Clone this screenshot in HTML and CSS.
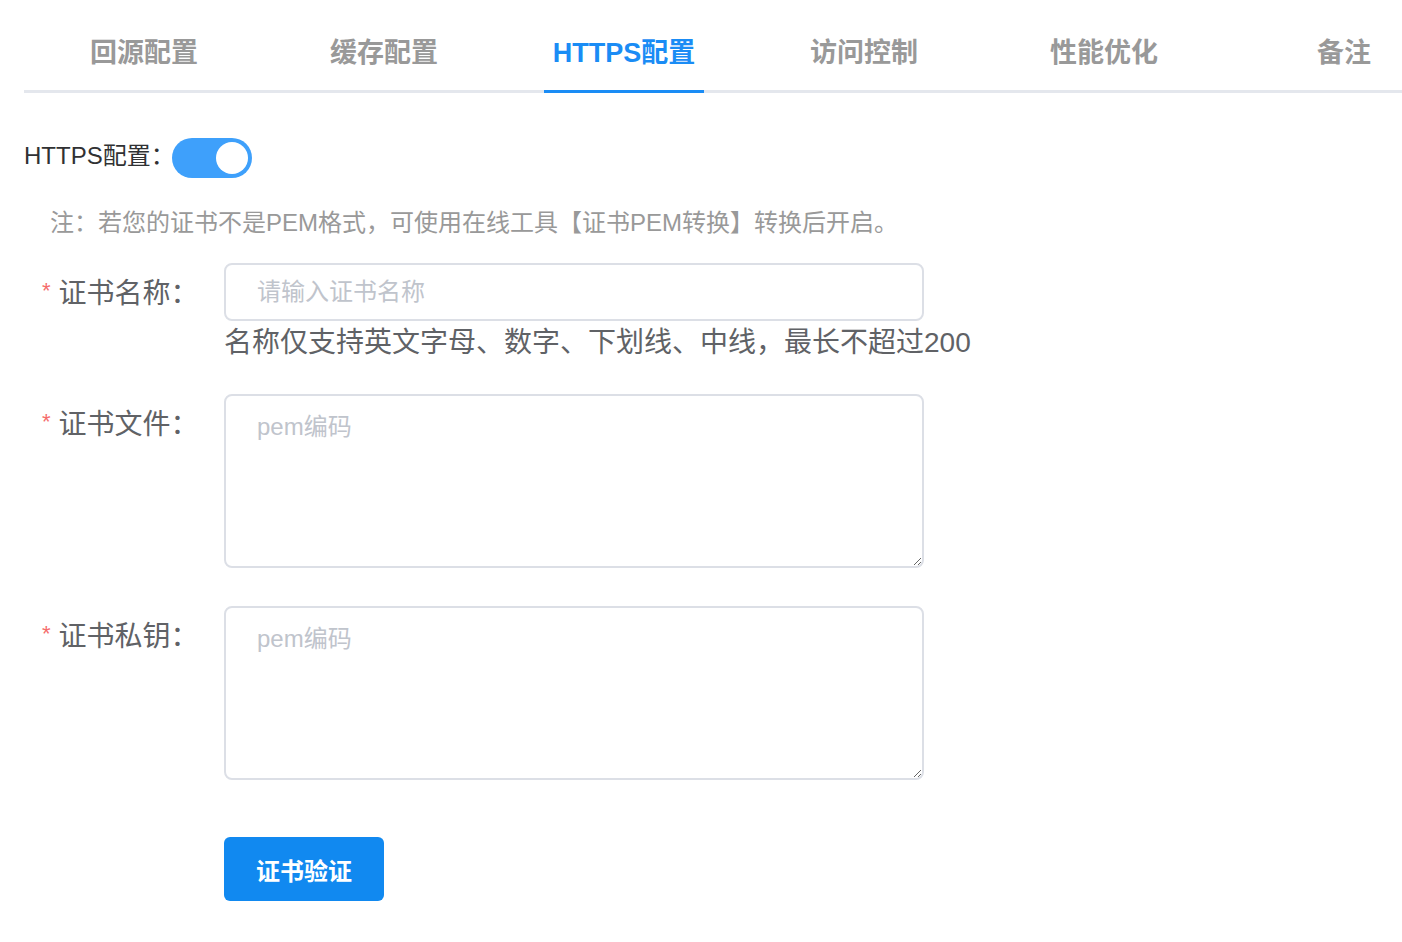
FILE: index.html
```html
<!DOCTYPE html>
<html lang="zh-CN">
<head>
  <meta charset="UTF-8" />
  <title>HTTPS配置</title>
  <link rel="stylesheet" href="styles.css">
</head>
<body>

  <div class="tabs">
    <div class="tab">回源配置</div>
    <div class="tab">缓存配置</div>
    <div class="tab active">HTTPS配置</div>
    <div class="tab">访问控制</div>
    <div class="tab">性能优化</div>
    <div class="tab">备注</div>
  </div>

  <div class="content">
    <div class="switch-row">
      <span class="switch-label">HTTPS配置：</span>
      <span class="switch on"><span class="knob"></span></span>
    </div>

    <div class="note">注：若您的证书不是PEM格式，可使用在线工具【证书PEM转换】转换后开启。</div>

    <div class="form-item">
      <label class="label required">证书名称：</label>
      <div class="field">
        <input class="input" type="text" placeholder="请输入证书名称">
        <div class="hint">名称仅支持英文字母、数字、下划线、中线，最长不超过200</div>
      </div>
    </div>

    <div class="form-item">
      <label class="label required">证书文件：</label>
      <div class="field">
        <textarea class="textarea" placeholder="pem编码"></textarea>
      </div>
    </div>

    <div class="form-item">
      <label class="label required">证书私钥：</label>
      <div class="field">
        <textarea class="textarea" placeholder="pem编码"></textarea>
      </div>
    </div>

    <div class="form-item actions">
      <div class="field">
        <button class="btn">证书验证</button>
      </div>
    </div>
  </div>

</body>
</html>
```

FILE: styles.css
```css
body {
  margin: 0;
  font-family: "Liberation Sans", "Noto Sans CJK SC", sans-serif;
  background: #fff;
  overflow: hidden;
}

.tabs {
  display: flex;
  margin-left: 24px;
  border-bottom: 3px solid #e4e7ed;
}

.tab {
  position: relative;
  flex: 0 0 240px;
  text-align: center;
  padding: 33px 0 17px;
  line-height: 40px;
  font-size: 27px;
  font-weight: bold;
  color: #999;
}

.tab.active {
  color: #1a8cf5;
}

.tab.active::after {
  content: "";
  position: absolute;
  left: 40px;
  right: 40px;
  bottom: -3px;
  height: 3px;
  background: #1a8cf5;
}

.content {
  padding-left: 24px;
}

.switch-row {
  display: flex;
  align-items: center;
  margin-top: 45px;
  height: 40px;
}

.switch-label {
  font-size: 24px;
  line-height: 32px;
  margin-top: -4px;
  color: #303133;
  margin-right: -3px;
}

.switch {
  position: relative;
  width: 80px;
  height: 40px;
  border-radius: 20px;
  background: #dcdfe6;
}

.switch.on {
  background: #3ea0fb;
}

.knob {
  position: absolute;
  top: 4px;
  left: 4px;
  width: 32px;
  height: 32px;
  border-radius: 50%;
  background: #fff;
}

.switch.on .knob {
  left: 44px;
}

.note {
  margin-top: 29px;
  padding-left: 26px;
  font-size: 24px;
  line-height: 32px;
  color: #999;
}

.form-item {
  display: flex;
  margin-top: 24px;
}

.form-item + .form-item {
  margin-top: 31px;
}

.form-item + .form-item + .form-item {
  margin-top: 38px;
}

.form-item + .form-item.actions {
  margin-top: 57px;
}

.label {
  flex: 0 0 182px;
  padding-left: 18px;
  font-size: 28px;
  line-height: 56px;
  color: #606266;
  white-space: nowrap;
}

.label.required::before {
  content: "*";
  color: #f56c6c;
  font-size: 22px;
  margin-right: 8px;
  vertical-align: 5px;
}

.field {
  width: 700px;
}

.input,
.textarea {
  display: block;
  box-sizing: border-box;
  width: 700px;
  border: 2px solid #dcdfe6;
  border-radius: 8px;
  font-family: inherit;
  font-size: 24px;
  color: #606266;
  outline: none;
}

.input {
  height: 58px;
  padding: 0 31px;
}

.textarea {
  height: 174px;
  padding: 15px 31px;
  line-height: 32px;
}

.input::placeholder,
.textarea::placeholder {
  color: #c0c4cc;
}

.hint {
  margin-top: 2px;
  font-size: 28px;
  line-height: 40px;
  color: #606266;
  white-space: nowrap;
}

.actions {
  padding-left: 200px;
}

.btn {
  width: 160px;
  height: 64px;
  border: none;
  border-radius: 6px;
  background: #1189f0;
  color: #fff;
  font-family: inherit;
  font-size: 24px;
  font-weight: bold;
  cursor: pointer;
}
```
